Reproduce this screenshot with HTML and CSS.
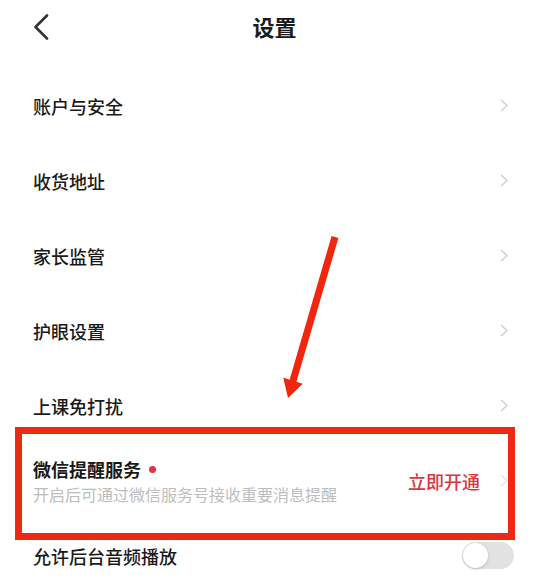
FILE: index.html
```html
<!DOCTYPE html>
<html lang="zh">
<head>
<meta charset="utf-8">
<link rel="stylesheet" href="styles.css">
</head>
<body>
<div class="page">
  <header class="header">
    <span class="back">
      <svg width="16" height="26" viewBox="0 0 16 26"><polyline points="14,1.5 2.5,13 14,24.5" fill="none" stroke="#333" stroke-width="2.6" stroke-linecap="round" stroke-linejoin="round"/></svg>
    </span>
    <h1 class="title">设置</h1>
    <span class="spacer"></span>
  </header>
  <ul class="list">
    <li class="row"><span class="label">账户与安全</span><span class="chev"><svg width="8" height="13" viewBox="0 0 8 13"><polyline points="1,1 7,6.5 1,12" fill="none" stroke="#cfcfcf" stroke-width="1.5"/></svg></span></li>
    <li class="row"><span class="label">收货地址</span><span class="chev"><svg width="8" height="13" viewBox="0 0 8 13"><polyline points="1,1 7,6.5 1,12" fill="none" stroke="#cfcfcf" stroke-width="1.5"/></svg></span></li>
    <li class="row"><span class="label">家长监管</span><span class="chev"><svg width="8" height="13" viewBox="0 0 8 13"><polyline points="1,1 7,6.5 1,12" fill="none" stroke="#cfcfcf" stroke-width="1.5"/></svg></span></li>
    <li class="row"><span class="label">护眼设置</span><span class="chev"><svg width="8" height="13" viewBox="0 0 8 13"><polyline points="1,1 7,6.5 1,12" fill="none" stroke="#cfcfcf" stroke-width="1.5"/></svg></span></li>
    <li class="row"><span class="label">上课免打扰</span><span class="chev"><svg width="8" height="13" viewBox="0 0 8 13"><polyline points="1,1 7,6.5 1,12" fill="none" stroke="#cfcfcf" stroke-width="1.5"/></svg></span></li>
    <li class="row">
      <div class="stack">
        <span class="label strong">微信提醒服务<i class="dot"></i></span>
        <span class="sub">开启后可通过微信服务号接收重要消息提醒</span>
      </div>
      <span class="action">立即开通</span>
      <span class="chev faint"><svg width="8" height="13" viewBox="0 0 8 13"><polyline points="1,1 7,6.5 1,12" fill="none" stroke="#e4e4e4" stroke-width="1.5"/></svg></span>
    </li>
    <li class="row"><span class="label">允许后台音频播放</span><span class="toggle"><i class="knob"></i></span></li>
  </ul>
  <div class="highlight"></div>
  <svg class="arrow" width="559" height="586" viewBox="0 0 559 586">
    <polygon points="331.6,236 338.4,238 296.4,381.7 302.8,383.8 288,398 283.2,377.6 289.6,379.7" fill="#f2260f"/>
  </svg>
</div>
</body>
</html>
```
FILE: styles.css
```css
* { box-sizing: border-box; }
html, body { margin: 0; padding: 0; background: #fff; }
body {
  font-family: "Noto Sans CJK SC", "Noto Sans", sans-serif;
  color: #1e1e1e;
  width: 559px;
  height: 586px;
  overflow: hidden;
}
.page { position: relative; width: 559px; height: 586px; }
.header {
  height: 52px;
  display: grid;
  grid-template-columns: 60px 1fr 70px;
  align-items: center;
}
.back { display: flex; align-items: center; padding-left: 33px; padding-top: 1px; }
.title {
  margin: 0;
  text-align: center;
  font-size: 22px;
  font-weight: 700;
  line-height: 1;
  color: #1a1a1a;
}
.list { list-style: none; margin: 0; padding: 16px 0 0 0; }
.row {
  height: 75px;
  display: flex;
  align-items: center;
  padding: 0 45px 0 33px;
}
.label { font-size: 18px; font-weight: 500; flex: 1; line-height: 1; color: #1a1a1a; }
.label.strong { font-weight: 600; display: flex; align-items: center; }
.chev { display: flex; align-items: center; margin-right: 6px; }
.chev.faint { margin-left: 20px; }
.stack { flex: 1; display: flex; flex-direction: column; gap: 8px; }
.dot {
  width: 7px; height: 7px; border-radius: 50%;
  background: #e53340; margin-left: 8px; margin-top: 2px;
}
.sub { font-size: 16px; color: #bdbdbd; line-height: 1; }
.action { font-size: 18px; color: #d9363e; font-weight: 500; line-height: 1; margin-top: 1px; }
.toggle {
  width: 52px; height: 27px; border-radius: 14px;
  background: #e2e2e2;
  display: flex; align-items: center; padding-left: 1px;
}
.knob {
  width: 25px; height: 25px; border-radius: 50%;
  background: #fff;
  box-shadow: 0 1px 3px rgba(0,0,0,0.18);
}
.highlight {
  position: absolute;
  left: 15px; top: 427px;
  width: 500px; height: 113px;
  border: 7px solid #ef2812;
  pointer-events: none;
}
.arrow { position: absolute; left: 0; top: 0; pointer-events: none; }
```
